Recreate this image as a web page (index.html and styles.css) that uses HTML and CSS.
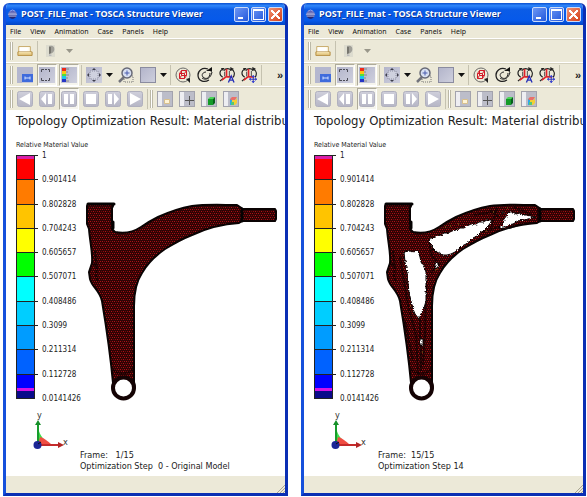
FILE: index.html
```html
<!DOCTYPE html>
<html lang="en">
<head>
<meta charset="utf-8">
<title>TOSCA Structure Viewer</title>
<link rel="stylesheet" href="styles.css">
</head>
<body>
<svg class="defs" aria-hidden="true">
  <defs>
    <linearGradient id="steel" x1="0" y1="0" x2="1" y2="1"><stop offset="0" stop-color="#b2b4ca"/><stop offset="1" stop-color="#cfd0de"/></linearGradient>
    <linearGradient id="silver" x1="0" y1="0" x2="0" y2="1"><stop offset="0" stop-color="#cfcfdb"/><stop offset="1" stop-color="#b6b6c6"/></linearGradient>
    <linearGradient id="orb" x1="0" y1="0" x2="0" y2="1"><stop offset="0" stop-color="#6a6fc4"/><stop offset="1" stop-color="#1c1d66"/></linearGradient>
    <filter id="ragged"><feTurbulence type="turbulence" baseFrequency=".4" numOctaves="1" seed="3"/><feDisplacementMap in="SourceGraphic" scale="3" xChannelSelector="R" yChannelSelector="G"/></filter>
    <pattern id="mesh" width="6" height="4" patternUnits="userSpaceOnUse">
      <rect width="6" height="4" fill="#2e0304"/>
      <rect x="0" y="0" width="1" height="1" fill="#b01216"/><rect x="2" y="0" width="1" height="1" fill="#7a080b"/><rect x="4" y="0" width="1" height="1" fill="#a81014"/>
      <rect x="1" y="2" width="1" height="1" fill="#8c0b0e"/><rect x="3" y="2" width="1" height="1" fill="#b01216"/><rect x="5" y="2" width="1" height="1" fill="#6c0709"/>
    </pattern>
  </defs>
  <symbol id="i-app" viewBox="0 0 12 12"><circle cx="6" cy="6" r="4.5" fill="url(#orb)"/><path d="M1.5 4.6h9M1 6.2h10M1.8 7.8h8.4" stroke="#cdd6f8" stroke-width=".8"/><path d="M3 2.5 6 1l3 1.5" stroke="#a2a8e6" fill="none"/></symbol>
  <symbol id="i-open" viewBox="0 0 18 16"><path d="M2 3h13v8H2z" fill="#fffdf0" stroke="#c3a25c"/><path d="M3 4h10l-2 5H3z" fill="#fff"/><path d="M1 9h16v4H1z" fill="#e5ca86" stroke="#b28a3c"/><path d="M2 10h14" stroke="#fff0c4"/></symbol>
  <symbol id="i-shade" viewBox="0 0 16 16"><rect x="2" y="2" width="9" height="12" fill="#dddccf"/><path d="M5 3c5-1 6 2 5 5-1 2-3 3-5 3z" fill="#a09f98"/><path d="M5 4v7l2-1V4z" fill="#77766f"/><path d="m5 11 3 1-1 1H5z" fill="#bbb"/></symbol>
  <symbol id="i-panel" viewBox="0 0 16 16"><rect width="16" height="16" fill="#c3c5d9"/><path d="M0 0h16v7H5v9H0z" fill="#b4b7cf"/><rect x="5" y="7" width="11" height="8" fill="#3f6bdc"/><path d="M8 9.500v3M8 11h5M13 9.500v3" stroke="#d4e2ff"/></symbol>
  <symbol id="i-dashes" viewBox="0 0 16 16"><rect width="16" height="16" fill="url(#steel)"/><path d="M2.500 5V2.500H5M6 2.500h2M9 2.500h1.500V5M2.500 11v2.500H5M6 13.500h2M9 13.500h1.500V11" stroke="#4b4b55" fill="none"/></symbol>
  <symbol id="i-legend" viewBox="0 0 16 16"><rect width="16" height="16" fill="url(#steel)"/><path d="M1 1h4v3H1z" fill="#f02818"/><path d="M1 4h4v3H1z" fill="#fbc814"/><path d="M1 7h4v2H1z" fill="#51df3b"/><path d="M1 9h4v3H1z" fill="#1cc6ec"/><path d="M1 12h4v3H1z" fill="#2636c6"/><path d="M5 2h3M5 5h2M5 8h3M5 11h2M5 14h3" stroke="#888"/></symbol>
  <symbol id="i-fit" viewBox="0 0 16 16"><rect width="16" height="16" fill="url(#steel)"/><rect x="4" y="4" width="8" height="8" fill="#cfd1df" stroke="#8e90a3" stroke-dasharray="1 1"/><path d="m8 1 2 2H6zM8 15l2-2H6zM1 8l2-2v4zM15 8l-2-2v4z" fill="#3e3f4c"/></symbol>
  <symbol id="i-zoom" viewBox="0 0 16 16"><rect x="6" y="9" width="9" height="6" fill="none" stroke="#777" stroke-dasharray="1 1"/><path d="m6 10-5 5" stroke="#73747c" stroke-width="2.500"/><circle cx="9" cy="6" r="5" fill="#d8e0f2" stroke="#686a77" stroke-width="1.500"/><path d="M9 3.500v5M6.500 6h5" stroke="#4b5cae"/></symbol>
  <symbol id="i-box" viewBox="0 0 16 16"><rect x=".5" y=".5" width="15" height="15" fill="url(#steel)" stroke="#8b8ca0"/></symbol>
  <symbol id="i-rotbox" viewBox="0 0 16 16"><circle cx="8" cy="8" r="7" fill="none" stroke="#6a6a68"/><path d="m11 12 4-1v5z" fill="#222"/><path d="M4.500 6.500h5v5h-5zM4.500 6.500l2-3h5l-2 3M11.500 3.500v5l-2 3M6.500 3.500v5l-2 3M6.500 8.500h5" fill="none" stroke="#d31b28"/></symbol>
  <symbol id="i-rot" viewBox="0 0 16 16"><path d="M11 2C5 0 1 4 1 8c0 6 6 8 11 5" fill="none" stroke="#222" stroke-width="1.300"/><path d="M9 5C6 5 4 8 6 10c3 3 7 1 7-4M5 11c4 3 9 0 10-6" fill="none" stroke="#222"/><path d="m9 4 6-4v5l-2-1z" fill="#111"/></symbol>
  <symbol id="i-axes" viewBox="0 0 17 17"><path d="M4 2C0 4 0 9 4 11M5 12c-2 1-3 2-4 3M13 2c4 2 4 6 2 9M5 4c2-3 7-3 8 0" fill="none" stroke="#222" stroke-width="1.200"/><path d="m2 1 4 0-2 3zM12 0l4 2-4 2z" fill="#222"/><path d="M8 2v8l-5 4M8 10.500h6" fill="none" stroke="#e0232a" stroke-width="1.800"/><path d="M11 4v6M6 5v5" stroke="#444"/></symbol>
  <symbol id="i-axesa" viewBox="0 0 17 17"><use href="#i-axes" width="17" height="17"/><path d="m10 16.500 3-7 3 7M11 14h4" fill="none" stroke="#2630b8" stroke-width="1.400"/></symbol>
  <symbol id="i-axesp" viewBox="0 0 17 17"><use href="#i-axes" width="17" height="17"/><path d="M13 9v8M9 13h8" stroke="#2630b8"/><path d="m13 8.500 2 2h-4zM13 17l2-2h-4zM8.500 13l2-2v4zM17 13l-2-2v4z" fill="#3943d2"/></symbol>
  <symbol id="i-caret" viewBox="0 0 7 4"><path d="M0 0h7L3.500 4z" fill="currentColor"/></symbol>
  <symbol id="b-key" viewBox="0 0 16 16"><rect x=".5" y=".5" width="15" height="15" rx="2" fill="url(#silver)" stroke="#b0b0be"/></symbol>
  <symbol id="i-back" viewBox="0 0 16 16"><use href="#b-key" width="16" height="16"/><path d="M13 2v12L2 8z" fill="#fff"/></symbol>
  <symbol id="i-stepb" viewBox="0 0 16 16"><use href="#b-key" width="16" height="16"/><path d="M7 2v12L2 8zM9 3h4v10H9z" fill="#fff"/></symbol>
  <symbol id="i-pause" viewBox="0 0 16 16"><use href="#b-key" width="16" height="16"/><path d="M3 3h4v10H3zM9 3h4v10H9z" fill="#fff"/></symbol>
  <symbol id="i-stop" viewBox="0 0 16 16"><use href="#b-key" width="16" height="16"/><path d="M3 3h10v10H3z" fill="#fff"/></symbol>
  <symbol id="i-stepf" viewBox="0 0 16 16"><use href="#b-key" width="16" height="16"/><path d="M3 3h4v10H3zM9 2v12l5-6z" fill="#fff"/></symbol>
  <symbol id="i-play" viewBox="0 0 16 16"><use href="#b-key" width="16" height="16"/><path d="M3 2v12l11-6z" fill="#fff"/></symbol>
  <symbol id="b-pane" viewBox="0 0 16 16"><rect x=".5" y=".5" width="15" height="15" fill="#bcbdc9" stroke="#a3a3ad"/><path d="M1 1h4v14H1z" fill="#eeeef2"/></symbol>
  <symbol id="i-pane1" viewBox="0 0 16 16"><use href="#b-pane" width="16" height="16"/><path d="M7.500 8.500h5v4h-5z" fill="#fff4d6" stroke="#d9c08c"/></symbol>
  <symbol id="i-pane2" viewBox="0 0 16 16"><use href="#b-pane" width="16" height="16"/><path d="M10.500 5v9M6 9.500h9" stroke="#555"/></symbol>
  <symbol id="i-pane3" viewBox="0 0 16 16"><use href="#b-pane" width="16" height="16"/><path d="M7 8h5v6H7z" fill="#149b28"/><path d="m7 8 2-2h5l-2 2z" fill="#49d657"/><path d="m12 8 2-2v6l-2 2z" fill="#07601a"/></symbol>
  <symbol id="i-pane4" viewBox="0 0 16 16"><use href="#b-pane" width="16" height="16"/><path d="M7 8h3v6H7z" fill="#30a8e8"/><path d="m7 8 2-2h5l-2 3H8z" fill="#e9706a"/><path d="M9 9h4l1-3v6l-2 2H9z" fill="#f2cf35"/><path d="M8 11h3v3H8z" fill="#54c878"/></symbol>
  <symbol id="i-triad" viewBox="33 406 40 44"><path d="M38 444V427c2 8 6 13 14 17z" fill="#3ce04a"/><path d="M38 444h14c-4-4-8-7-12-8z" fill="#f04d42"/><path d="M38 444V422" stroke="#179c2c" stroke-width="2"/><path d="m38 419 3 5h-6z" fill="#16902a"/><path d="M38 444h20" stroke="#c52b2b" stroke-width="2"/><path d="m64 444-6-3v6z" fill="#b32626"/><circle cx="37.500" cy="444" r="4" fill="#1c2696"/><path d="m38 443 3-2" stroke="#111"/><text class="axis" x="37" y="417">y</text><text class="axis" x="63" y="444">x</text></symbol>
  <symbol id="m-solid" viewBox="84 199 196 204">
    <path class="skin" d="M88 203H113V205L112 207V222L113 224 112 228 115 231C124 233 132 232 141 226C147 222 152 219 158 216C169 211 181 207 192 205C206 203 222 204 237 204L243 208H275L276 210V218L275 220H242L239 222C222 223 207 227 192 234C182 238 173 243 165 248C155 255 147 263 142 272C136 281 134 292 134 305V381A11 11 0 1 1 113 382C111 360 107 330 102 300C100 290 92 286 90 278L89 271 92 262C93 252 90 242 89 228L87 223V205Z"/>
    <circle class="bore" cx="123.500" cy="387" r="10.500"/>
    <path class="ink" d="M88 203h26M113 221v6M242 208v12"/>
    <path class="crease" d="M93 263c8 3 0 10 5 17M95 250l2 18M113 368c4 6 15 6 20 0"/>
  </symbol>
  <symbol id="m-void" viewBox="84 199 196 204">
    <use href="#m-solid" x="84" y="199" width="196" height="204"/>
    <path class="crease" d="M176 214l24-4M184 231l20-6M199 207l-6 20M192 209l10 8M216 206l18 8M240 208v12M102 256l8 48 8 30 2 40M128 274l-1 60-2 30M107 320l8 40M122 318v20M123 344v26M132 240c0 12 1 15 7 20M142 262l-9 10M211 227c12-4 18-5 27-5"/>
    <g class="hole">
      <path d="M130 240 131 236 135 236 138 234 142 233 145 231 149 231 153 229 157 228 160 226 165 226 168 224 172 222 177 222 180 220 184 220 188 218 193 218 190 223 187 226 184 229 181 231 178 234 174 236 171 239 167 242 163 244 160 247 156 250 152 252 148 253 144 253 141 251 137 250 134 247 133 243z"/>
      <path d="M200 226 204 222 205 217 208 213 210 210 214 210 217 212 221 211 224 213 228 213 236 215 229 217 225 218 219 219 214 222 209 223 205 226z"/>
      <path d="M203 210h2l-1 2zM136 260l3 1v4l-3 2z"/>
      <path d="M105 250 110 249 114 250 119 249 121 255 122 260 125 265 127 270 127 278 127 290 127 299 125 306 122 312 120 317 116 312 114 307 112 299 110 290 109 281 108 270 106 260z"/>
      <path d="M121 337h3v6h-3z"/>
    </g>
    <path class="speck" d="M147 226h1M152 225h1M160 223h1M137 269h1M139 268h1M112 305h1M124 351h1M188 230h1M209 207h1M195 211h1"/>
  </symbol>
</svg>

<main class="desktop">
  <section class="window" aria-label="Original model">
    <header class="titlebar">
      <svg class="logo"><use href="#i-app"/></svg>
      <h1>POST_FILE_mat - TOSCA Structure Viewer</h1>
      <button class="ctl min" aria-label="Minimize"></button><button class="ctl max" aria-label="Maximize"></button><button class="ctl close" aria-label="Close"></button>
    </header>
    <nav class="menubar"><button>File</button><button>View</button><button>Animation</button><button>Case</button><button>Panels</button><button>Help</button></nav>
    <div class="toolbar">
      <i class="grip"></i>
      <button class="tool" aria-label="Open"><svg><use href="#i-open"/></svg></button>
      <i class="sep"></i>
      <button class="tool wide" aria-label="Shading"><svg><use href="#i-shade"/></svg></button>
      <button class="drop dim" aria-label="Shading options"><svg><use href="#i-caret"/></svg></button>
    </div>
    <div class="toolbar">
      <i class="grip"></i>
      <button class="tool" aria-label="Panel"><svg><use href="#i-panel"/></svg></button>
      <button class="tool on" aria-label="Titles"><svg><use href="#i-dashes"/></svg></button>
      <button class="tool on" aria-label="Legend"><svg><use href="#i-legend"/></svg></button>
      <i class="sep"></i>
      <button class="tool" aria-label="Fit view"><svg><use href="#i-fit"/></svg></button>
      <button class="drop" aria-label="Fit options"><svg><use href="#i-caret"/></svg></button>
      <button class="tool" aria-label="Zoom"><svg><use href="#i-zoom"/></svg></button>
      <button class="tool" aria-label="Background"><svg><use href="#i-box"/></svg></button>
      <button class="drop" aria-label="Background options"><svg><use href="#i-caret"/></svg></button>
      <i class="sep"></i>
      <button class="tool" aria-label="Rotate model"><svg><use href="#i-rotbox"/></svg></button>
      <button class="tool" aria-label="Rotate"><svg><use href="#i-rot"/></svg></button>
      <button class="tool" aria-label="Auto axes"><svg><use href="#i-axesa"/></svg></button>
      <button class="tool" aria-label="Move axes"><svg><use href="#i-axesp"/></svg></button>
      <i class="sep"></i>
      <button class="more" aria-label="More tools">»</button>
    </div>
    <div class="toolbar">
      <i class="grip"></i>
      <button class="tool" aria-label="Play backward"><svg><use href="#i-back"/></svg></button>
      <button class="tool" aria-label="Step backward"><svg><use href="#i-stepb"/></svg></button>
      <button class="tool on" aria-label="Pause"><svg><use href="#i-pause"/></svg></button>
      <button class="tool" aria-label="Stop"><svg><use href="#i-stop"/></svg></button>
      <button class="tool" aria-label="Step forward"><svg><use href="#i-stepf"/></svg></button>
      <button class="tool" aria-label="Play"><svg><use href="#i-play"/></svg></button>
      <i class="sep"></i><i class="grip"></i>
      <button class="tool" aria-label="File panel"><svg><use href="#i-pane1"/></svg></button>
      <button class="tool" aria-label="Pick panel"><svg><use href="#i-pane2"/></svg></button>
      <button class="tool" aria-label="Part panel"><svg><use href="#i-pane3"/></svg></button>
      <button class="tool" aria-label="Color panel"><svg><use href="#i-pane4"/></svg></button>
    </div>
    <div class="viewport">
      <h2>Topology Optimization Result: Material distribution</h2>
      <h3>Relative Material Value</h3>
      <div class="scene">
        <div class="legend">
          <div class="scale"><i class="c1"></i><i class="c2"></i><i class="c3"></i><i class="c4"></i><i class="c5"></i><i class="c6"></i><i class="c7"></i><i class="c8"></i><i class="c9"></i><i class="c10"></i></div>
          <ol class="values"><li>1</li><li>0.901414</li><li>0.802828</li><li>0.704243</li><li>0.605657</li><li>0.507071</li><li>0.408486</li><li>0.3099</li><li>0.211314</li><li>0.112728</li><li>0.0141426</li></ol>
        </div>
        <svg class="model" role="img" aria-label="Control arm, full material"><use href="#m-solid"/></svg>
      </div>
      <div class="caption">
        <svg class="triad"><use href="#i-triad"/></svg>
        <p>Frame:   1/15
Optimization Step  0 - Original Model</p>
      </div>
    </div>
    <footer class="status"><svg class="sizer" viewBox="0 0 8 8"><path d="m0 8 8-8M3 8l5-5M6 8l2-2" stroke="#a9a591"/></svg></footer>
  </section>

  <section class="window" aria-label="Optimized model">
    <header class="titlebar">
      <svg class="logo"><use href="#i-app"/></svg>
      <h1>POST_FILE_mat - TOSCA Structure Viewer</h1>
      <button class="ctl min" aria-label="Minimize"></button><button class="ctl max" aria-label="Maximize"></button><button class="ctl close" aria-label="Close"></button>
    </header>
    <nav class="menubar"><button>File</button><button>View</button><button>Animation</button><button>Case</button><button>Panels</button><button>Help</button></nav>
    <div class="toolbar">
      <i class="grip"></i>
      <button class="tool" aria-label="Open"><svg><use href="#i-open"/></svg></button>
      <i class="sep"></i>
      <button class="tool wide" aria-label="Shading"><svg><use href="#i-shade"/></svg></button>
      <button class="drop dim" aria-label="Shading options"><svg><use href="#i-caret"/></svg></button>
    </div>
    <div class="toolbar">
      <i class="grip"></i>
      <button class="tool" aria-label="Panel"><svg><use href="#i-panel"/></svg></button>
      <button class="tool on" aria-label="Titles"><svg><use href="#i-dashes"/></svg></button>
      <button class="tool on" aria-label="Legend"><svg><use href="#i-legend"/></svg></button>
      <i class="sep"></i>
      <button class="tool" aria-label="Fit view"><svg><use href="#i-fit"/></svg></button>
      <button class="drop" aria-label="Fit options"><svg><use href="#i-caret"/></svg></button>
      <button class="tool" aria-label="Zoom"><svg><use href="#i-zoom"/></svg></button>
      <button class="tool" aria-label="Background"><svg><use href="#i-box"/></svg></button>
      <button class="drop" aria-label="Background options"><svg><use href="#i-caret"/></svg></button>
      <i class="sep"></i>
      <button class="tool" aria-label="Rotate model"><svg><use href="#i-rotbox"/></svg></button>
      <button class="tool" aria-label="Rotate"><svg><use href="#i-rot"/></svg></button>
      <button class="tool" aria-label="Auto axes"><svg><use href="#i-axesa"/></svg></button>
      <button class="tool" aria-label="Move axes"><svg><use href="#i-axesp"/></svg></button>
      <i class="sep"></i>
      <button class="more" aria-label="More tools">»</button>
    </div>
    <div class="toolbar">
      <i class="grip"></i>
      <button class="tool" aria-label="Play backward"><svg><use href="#i-back"/></svg></button>
      <button class="tool" aria-label="Step backward"><svg><use href="#i-stepb"/></svg></button>
      <button class="tool on" aria-label="Pause"><svg><use href="#i-pause"/></svg></button>
      <button class="tool" aria-label="Stop"><svg><use href="#i-stop"/></svg></button>
      <button class="tool" aria-label="Step forward"><svg><use href="#i-stepf"/></svg></button>
      <button class="tool" aria-label="Play"><svg><use href="#i-play"/></svg></button>
      <i class="sep"></i><i class="grip"></i>
      <button class="tool" aria-label="File panel"><svg><use href="#i-pane1"/></svg></button>
      <button class="tool" aria-label="Pick panel"><svg><use href="#i-pane2"/></svg></button>
      <button class="tool" aria-label="Part panel"><svg><use href="#i-pane3"/></svg></button>
      <button class="tool" aria-label="Color panel"><svg><use href="#i-pane4"/></svg></button>
    </div>
    <div class="viewport">
      <h2>Topology Optimization Result: Material distribution</h2>
      <h3>Relative Material Value</h3>
      <div class="scene">
        <div class="legend">
          <div class="scale"><i class="c1"></i><i class="c2"></i><i class="c3"></i><i class="c4"></i><i class="c5"></i><i class="c6"></i><i class="c7"></i><i class="c8"></i><i class="c9"></i><i class="c10"></i></div>
          <ol class="values"><li>1</li><li>0.901414</li><li>0.802828</li><li>0.704243</li><li>0.605657</li><li>0.507071</li><li>0.408486</li><li>0.3099</li><li>0.211314</li><li>0.112728</li><li>0.0141426</li></ol>
        </div>
        <svg class="model" role="img" aria-label="Control arm, optimized material"><use href="#m-void"/></svg>
      </div>
      <div class="caption">
        <svg class="triad"><use href="#i-triad"/></svg>
        <p>Frame:  15/15
Optimization Step 14</p>
      </div>
    </div>
    <footer class="status"><svg class="sizer" viewBox="0 0 8 8"><path d="m0 8 8-8M3 8l5-5M6 8l2-2" stroke="#a9a591"/></svg></footer>
  </section>
</main>
</body>
</html>
```
FILE: styles.css
```css
* { box-sizing: border-box; }
body { margin: 0; background: #fff; color: #222; font-family: "DejaVu Sans Condensed", "DejaVu Sans", sans-serif; }
button { margin: 0; padding: 0; border: 0; background: none; color: inherit; font: inherit; }
h1, h2, h3, p, ol { margin: 0; padding: 0; font-weight: normal; }
svg { display: block; }
.defs { position: absolute; width: 0; height: 0; }

.desktop { display: flex; gap: 13px; min-height: 100vh; padding: 3px 1px 1px 3px; }
.window { flex: 1; min-width: 0; display: flex; flex-direction: column; border: 3px solid; border-color: #0a4be0 #0a2fb4 #0a2fb4 #1550dc; border-top: 0; border-radius: 6px 6px 0 0; background: #ece9d8; overflow: hidden; }

.titlebar { display: flex; align-items: center; gap: 2px; height: 22px; padding: 0 2px 0 1px; background: linear-gradient(#0a50d0, #2f86fa 12%, #0b5ce6 30%, #0659ea 80%, #0345c4); }
.titlebar h1 { flex: 1; margin-left: 1px; color: #fff; font: bold 9px/16px "Open Sans", sans-serif; white-space: nowrap; text-shadow: 1px 1px #0a3390; }
.logo { width: 11px; height: 11px; }
.ctl { width: 15px; height: 15px; border: 1px solid #c9dafa; border-radius: 2px; background: linear-gradient(135deg, #6d97f4, #2257dc); }
.ctl::before { content: ""; display: block; margin: 0 auto; }
.min::before { width: 5px; height: 2px; margin: 7px 0 0 3px; background: #fff; }
.max::before { width: 9px; height: 8px; border: 1px solid #fff; border-top-width: 2px; }
.close { background: linear-gradient(135deg, #f09070, #d5401a); }
.close::before { width: 9px; height: 9px; background: linear-gradient(45deg, transparent 43%, #fff 43%, #fff 57%, transparent 57%), linear-gradient(-45deg, transparent 43%, #fff 43%, #fff 57%, transparent 57%); }

.menubar { display: flex; gap: 9px; height: 13px; padding-left: 4px; font: 7px/12px "Noto Sans", sans-serif; color: #111; }

.toolbar { display: flex; align-items: center; gap: 2px; height: 24px; padding: 0 2px 0 4px; border-top: 1px solid #fff; box-shadow: inset 0 1px #d6d2bf; }
.grip { width: 3px; height: 18px; border: 1px solid #bbb8a6; border-top: 0; border-bottom: 0; background: #fff; }
.sep { width: 1px; height: 20px; background: #c5c2b0; }
.tool { display: grid; place-items: center; flex: none; width: 20px; height: 22px; }
.tool svg { width: 16px; height: 16px; }
.tool.on { border: 1px solid; border-color: #aeab9a #fff #fff #aeab9a; background: #f6f5ee; }
.tool.wide { width: 24px; }
.drop { width: 8px; height: 20px; }
.drop svg { width: 7px; height: 4px; color: #111; }
.drop.dim svg { color: #99978a; }
.more { margin-left: auto; font: bold 11px/16px "Liberation Sans", sans-serif; }

.viewport { flex: 1; display: flex; flex-direction: column; padding-left: 10px; background: #fff; overflow: hidden; }
.viewport h2 { padding-top: 3px; font-size: 13px; line-height: 16px; white-space: nowrap; }
.viewport h3 { padding-top: 12px; font-size: 7px; line-height: 9px; }
.scene { display: flex; align-items: flex-start; }
.legend { display: flex; gap: 7px; width: 68px; height: 254px; }
.scale { display: flex; flex-direction: column; width: 19px; margin: 5px 0; border: 1px solid #222; border-top: 0; }
.scale i { position: relative; flex: 1; border-top: 1px solid #222; }
.scale i::after { content: ""; position: absolute; top: -1px; left: 100%; width: 4px; height: 1px; background: #222; }
.c1 { background: linear-gradient(#d820a8 3px, #f00 3px); }
.c2 { background: #ff7b00; }
.c3 { background: #ffc400; }
.c4 { background: #ff0; }
.c5 { background: #0f0; }
.c6 { background: #0ff; }
.c7 { background: #00ceff; }
.c8 { background: #009cff; }
.c9 { background: #0062ff; }
.c10 { background: linear-gradient(#00f 55%, #d512e6 55%, #d512e6 69%, #0a0a8a 69%); }
.values { display: flex; flex-direction: column; justify-content: space-between; padding-top: 1px; list-style: none; font-size: 8px; line-height: 10px; }

.model { flex: none; width: 196px; height: 204px; margin-top: 50px; }
.skin { fill: url(#mesh); stroke: #0a0303; stroke-width: 2; stroke-linejoin: round; }
.bore { fill: #fff; stroke: #140304; stroke-width: 4; }
.ink { fill: none; stroke: #050202; stroke-width: 3; stroke-linecap: round; }
.crease { fill: none; stroke: #0a0202; stroke-width: 2; stroke-dasharray: 3 1; opacity: .7; }
.hole { fill: #fff; stroke: #0a0303; stroke-width: 1; filter: url(#ragged); }
.speck { stroke: #8b7a1a; }

.caption { flex: 1; display: flex; align-items: flex-start; padding: 3px 0 4px 17px; }
.triad { flex: none; width: 40px; height: 44px; }
.axis { font: 9px "DejaVu Sans Condensed", sans-serif; fill: #333; }
.caption p { align-self: flex-end; margin-left: 7px; font-size: 9px; line-height: 11px; white-space: pre; }

.status { display: flex; justify-content: flex-end; align-items: flex-end; height: 17px; }
.sizer { width: 8px; height: 8px; }
```
